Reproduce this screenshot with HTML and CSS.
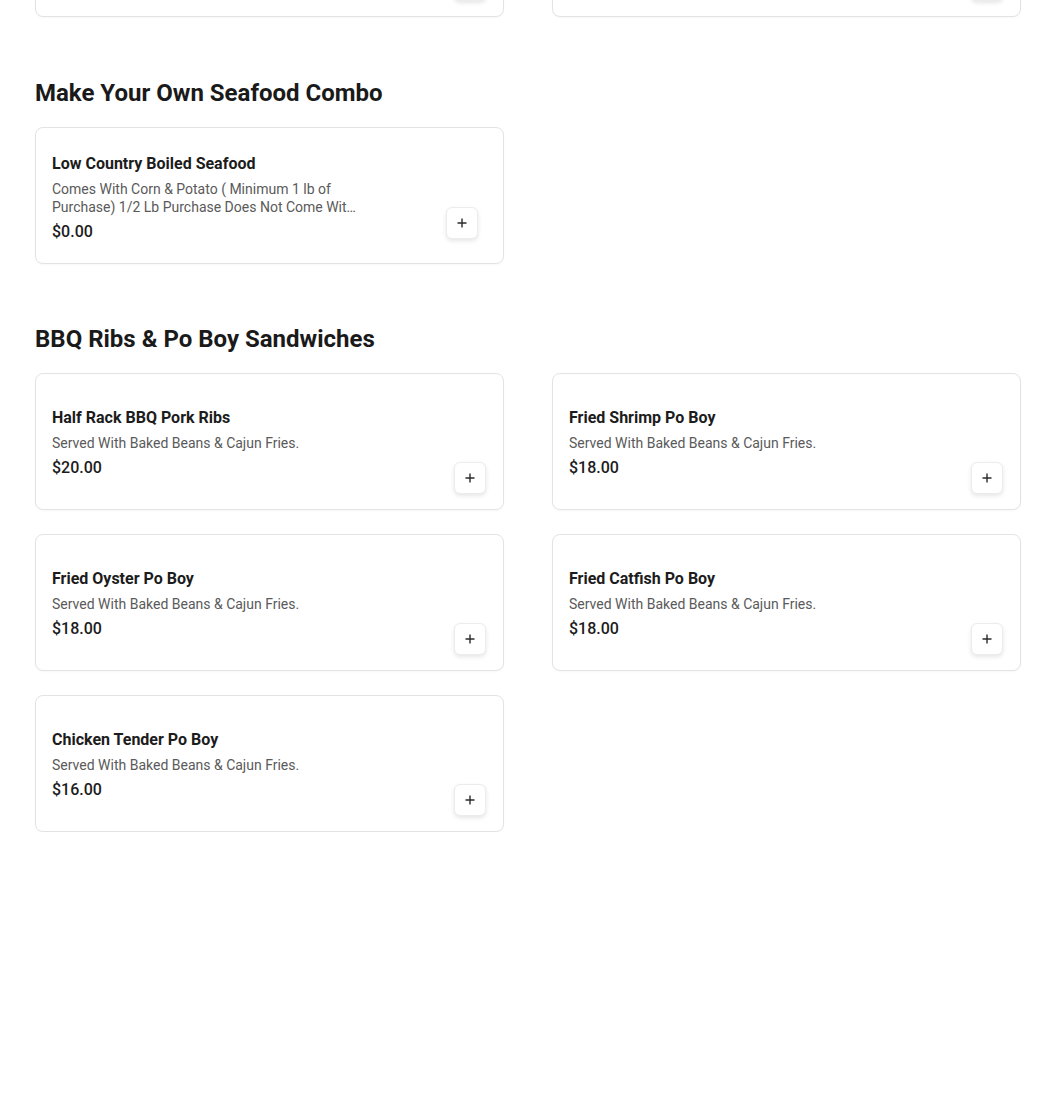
FILE: index.html
```html
<!DOCTYPE html>
<html lang="en">
<head>
<meta charset="utf-8">
<title>Menu</title>
<link rel="stylesheet" href="styles.css">
</head>
<body>
<main class="menu">
  <section class="section section-top">
    <div class="grid">
      <div class="card">
        <div class="info"><div class="name">&nbsp;</div></div>
        <button class="add" aria-label="Add"><svg viewBox="0 0 12 12" width="12" height="12"><path d="M6 1.5v9M1.5 6h9" stroke="#2b2b2b" stroke-width="1.4" fill="none"/></svg></button>
      </div>
      <div class="card">
        <div class="info"><div class="name">&nbsp;</div></div>
        <button class="add" aria-label="Add"><svg viewBox="0 0 12 12" width="12" height="12"><path d="M6 1.5v9M1.5 6h9" stroke="#2b2b2b" stroke-width="1.4" fill="none"/></svg></button>
      </div>
    </div>
  </section>

  <section class="section">
    <h2 class="heading">Make Your Own Seafood Combo</h2>
    <div class="grid">
      <div class="card card-long">
        <div class="info">
          <div class="name">Low Country Boiled Seafood</div>
          <div class="desc desc-clamp">Comes With Corn &amp; Potato ( Minimum 1 lb of Purchase) 1/2 Lb Purchase Does Not Come Wit…</div>
          <div class="price">$0.00</div>
        </div>
        <button class="add" aria-label="Add"><svg viewBox="0 0 12 12" width="12" height="12"><path d="M6 1.5v9M1.5 6h9" stroke="#2b2b2b" stroke-width="1.4" fill="none"/></svg></button>
      </div>
    </div>
  </section>

  <section class="section section-tight">
    <h2 class="heading">BBQ Ribs &amp; Po Boy Sandwiches</h2>
    <div class="grid">
      <div class="card">
        <div class="info">
          <div class="name">Half Rack BBQ Pork Ribs</div>
          <div class="desc">Served With Baked Beans &amp; Cajun Fries.</div>
          <div class="price">$20.00</div>
        </div>
        <button class="add" aria-label="Add"><svg viewBox="0 0 12 12" width="12" height="12"><path d="M6 1.5v9M1.5 6h9" stroke="#2b2b2b" stroke-width="1.4" fill="none"/></svg></button>
      </div>
      <div class="card">
        <div class="info">
          <div class="name">Fried Shrimp Po Boy</div>
          <div class="desc">Served With Baked Beans &amp; Cajun Fries.</div>
          <div class="price">$18.00</div>
        </div>
        <button class="add" aria-label="Add"><svg viewBox="0 0 12 12" width="12" height="12"><path d="M6 1.5v9M1.5 6h9" stroke="#2b2b2b" stroke-width="1.4" fill="none"/></svg></button>
      </div>
      <div class="card">
        <div class="info">
          <div class="name">Fried Oyster Po Boy</div>
          <div class="desc">Served With Baked Beans &amp; Cajun Fries.</div>
          <div class="price">$18.00</div>
        </div>
        <button class="add" aria-label="Add"><svg viewBox="0 0 12 12" width="12" height="12"><path d="M6 1.5v9M1.5 6h9" stroke="#2b2b2b" stroke-width="1.4" fill="none"/></svg></button>
      </div>
      <div class="card">
        <div class="info">
          <div class="name">Fried Catfish Po Boy</div>
          <div class="desc">Served With Baked Beans &amp; Cajun Fries.</div>
          <div class="price">$18.00</div>
        </div>
        <button class="add" aria-label="Add"><svg viewBox="0 0 12 12" width="12" height="12"><path d="M6 1.5v9M1.5 6h9" stroke="#2b2b2b" stroke-width="1.4" fill="none"/></svg></button>
      </div>
      <div class="card">
        <div class="info">
          <div class="name">Chicken Tender Po Boy</div>
          <div class="desc">Served With Baked Beans &amp; Cajun Fries.</div>
          <div class="price">$16.00</div>
        </div>
        <button class="add" aria-label="Add"><svg viewBox="0 0 12 12" width="12" height="12"><path d="M6 1.5v9M1.5 6h9" stroke="#2b2b2b" stroke-width="1.4" fill="none"/></svg></button>
      </div>
    </div>
  </section>
</main>
</body>
</html>
```
FILE: styles.css
```css
html, body {
  margin: 0;
  padding: 0;
  background: #ffffff;
}

body {
  font-family: Roboto, "Liberation Sans", Arial, sans-serif;
  color: #1a1a1a;
}

.menu {
  width: 986px;
  margin-left: 35px;
}

.section {
  margin-top: 60px;
}

.section-top {
  margin-top: -120px;
}

.section-tight {
  margin-top: 59px;
}

.heading {
  margin: 0 0 18px 0;
  font-size: 24px;
  line-height: 32px;
  font-weight: 700;
  color: #1a1a1a;
}

.grid {
  display: grid;
  grid-template-columns: 1fr 1fr;
  column-gap: 48px;
  row-gap: 24px;
}

.card {
  box-sizing: border-box;
  height: 137px;
  border: 1px solid #e3e3e3;
  border-radius: 8px;
  padding: 16px 17px 15px 16px;
  display: flex;
  align-items: center;
  background: #fff;
  box-shadow: 0 1px 2px rgba(0, 0, 0, 0.03);
}

.info {
  flex: 1;
  min-width: 0;
  padding-top: 2px;
}

.card-long .info {
  padding-top: 4px;
}

.name {
  font-size: 16px;
  line-height: 24px;
  font-weight: 700;
  color: #1c1c1c;
}

.desc {
  margin-top: 5px;
  font-size: 14px;
  line-height: 17px;
  color: #5a5a5a;
}

.desc-clamp {
  max-width: 310px;
  line-height: 17.5px;
}

.price {
  margin-top: 4px;
  font-size: 16px;
  line-height: 24px;
  font-weight: 500;
  color: #1c1c1c;
}

.add {
  align-self: flex-end;
  flex: none;
  width: 32px;
  height: 32px;
  padding: 0;
  border: 1px solid #ececec;
  border-radius: 6px;
  background: #fff;
  box-shadow: 0 2px 4px rgba(0, 0, 0, 0.10);
  display: flex;
  align-items: center;
  justify-content: center;
  cursor: pointer;
}

.card-long .add {
  margin-right: 8px;
  margin-bottom: 9px;
}
```
